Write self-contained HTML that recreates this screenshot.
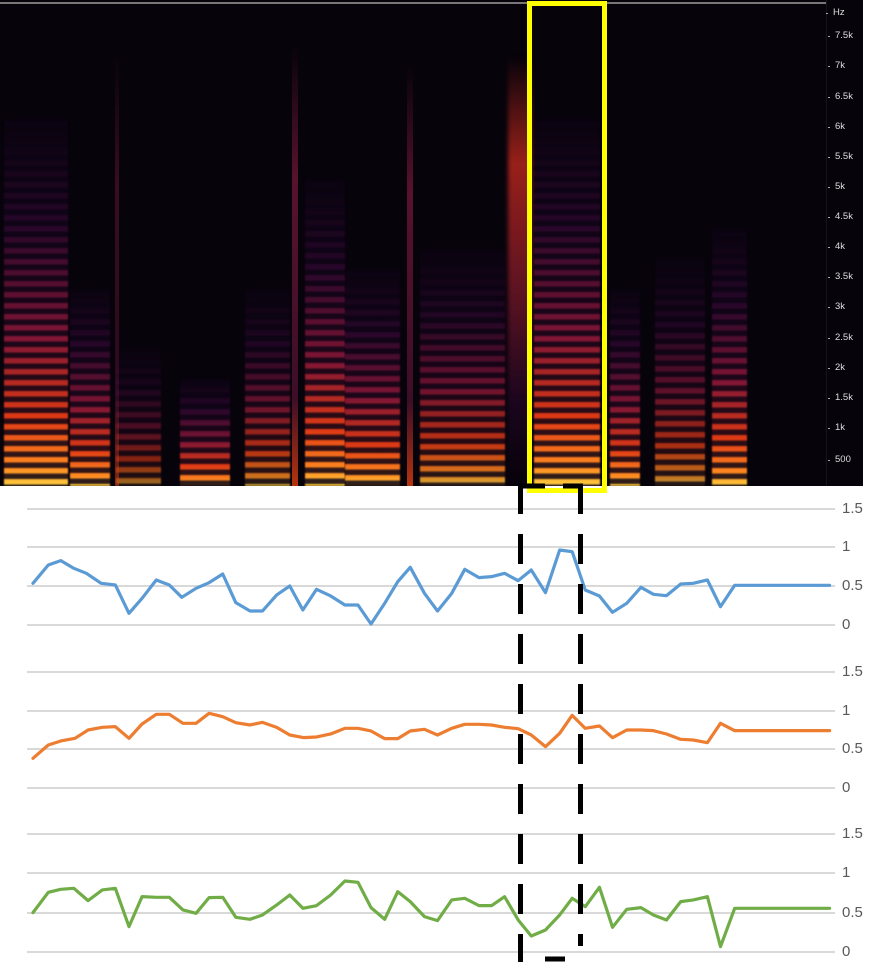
<!DOCTYPE html>
<html><head><style>
body{margin:0;width:877px;height:974px;background:#fff;position:relative;overflow:hidden;font-family:"Liberation Sans",sans-serif}
#spec{position:absolute;left:0;top:0;width:863px;height:486px;background:#07030b;overflow:hidden}
.b{position:absolute;bottom:0}
.s{background:
 repeating-linear-gradient(to bottom, rgba(7,3,11,0) 0 5px, rgba(12,3,20,.85) 6px 11px),
 linear-gradient(to bottom, rgba(60,10,80,0) 0%, rgba(80,12,80,.45) 30%, rgba(150,25,60,.85) 60%, #e03a14 82%, #ff8a20 95%, #ffd040 100%);
 filter:blur(.8px)}
.l{background:linear-gradient(to bottom,rgba(120,20,90,0),rgba(150,30,70,.7) 30%,rgba(120,25,70,.6) 80%,#e04010)}
.lab{position:absolute;left:835px;color:#ddd;font-size:9.5px;line-height:10px}
.lab:before{content:"";position:absolute;left:-7px;top:5px;width:2px;height:1px;background:#aaa}
.ax{position:absolute;left:842px;color:#595959;font-size:15px;line-height:16px}
</style></head><body>
<div id="spec">
<div style="position:absolute;left:0;top:2px;width:826px;height:2px;background:#777"></div>
<div class="b s" style="left:4px;width:64px;height:370px"></div>
<div class="b s" style="left:70px;width:40px;height:200px"></div>
<div class="b s" style="left:116px;width:45px;height:140px;opacity:.6"></div>
<div class="b l" style="left:115px;width:4px;height:430px;opacity:.5"></div>
<div class="b s" style="left:180px;width:50px;height:110px"></div>
<div class="b s" style="left:245px;width:45px;height:200px;opacity:.8"></div>
<div class="b l" style="left:292px;width:6px;height:440px;opacity:.8"></div>
<div class="b s" style="left:305px;width:40px;height:310px"></div>
<div class="b s" style="left:345px;width:55px;height:220px"></div>
<div class="b l" style="left:407px;width:6px;height:420px;opacity:.8"></div>
<div class="b s" style="left:420px;width:85px;height:240px;opacity:.85"></div>
<div class="b" style="left:508px;width:24px;height:430px;background:linear-gradient(to bottom,rgba(140,20,80,0),rgba(190,40,30,.8) 25%,rgba(150,30,50,.6) 55%,rgba(60,10,60,.4) 80%,rgba(0,0,0,0));filter:blur(2px)"></div>
<div class="b s" style="left:534px;width:66px;height:370px"></div>
<div class="b s" style="left:610px;width:30px;height:200px"></div>
<div class="b s" style="left:655px;width:50px;height:230px;opacity:.75"></div>
<div class="b s" style="left:712px;width:35px;height:260px"></div>
<div style="position:absolute;left:826px;top:0;width:1px;height:486px;background:#151515"></div>
<div class="lab" style="top:8px;left:833px">Hz</div>
<div class="lab" style="top:31px">7.5k</div><div class="lab" style="top:61px">7k</div>
<div class="lab" style="top:92px">6.5k</div><div class="lab" style="top:122px">6k</div>
<div class="lab" style="top:152px">5.5k</div><div class="lab" style="top:182px">5k</div>
<div class="lab" style="top:212px">4.5k</div><div class="lab" style="top:242px">4k</div>
<div class="lab" style="top:272px">3.5k</div><div class="lab" style="top:302px">3k</div>
<div class="lab" style="top:333px">2.5k</div><div class="lab" style="top:363px">2k</div>
<div class="lab" style="top:393px">1.5k</div><div class="lab" style="top:423px">1k</div>
<div class="lab" style="top:455px">500</div>
</div>
<div style="position:absolute;left:527px;top:1px;width:70px;height:482px;border:5px solid #ffff00"></div>

<svg width="877" height="974" style="position:absolute;left:0;top:0">
<g stroke="#d9d9d9" stroke-width="2">
<line x1="27" x2="835" y1="509" y2="509"/><line x1="27" x2="835" y1="547" y2="547"/><line x1="27" x2="835" y1="586" y2="586"/><line x1="27" x2="835" y1="625" y2="625"/>
<line x1="27" x2="835" y1="672" y2="672"/><line x1="27" x2="835" y1="711" y2="711"/><line x1="27" x2="835" y1="749" y2="749"/><line x1="27" x2="835" y1="788" y2="788"/>
<line x1="27" x2="835" y1="834" y2="834"/><line x1="27" x2="835" y1="873" y2="873"/><line x1="27" x2="835" y1="913" y2="913"/><line x1="27" x2="835" y1="952" y2="952"/>
</g>
<g fill="none" stroke-width="3.2" stroke-linejoin="round" stroke-linecap="round">
<g transform="translate(0,480) scale(0.5682,0.3333)">
<polyline vector-effect="non-scaling-stroke" stroke="#5b9bd5" points="58,310 85,255 107,242 130,265 152,280 178,310 203,315 227,400 250,355 275,300 298,315 320,352 345,325 368,308 392,282 415,368 440,393 462,393 487,345 510,318 533,390 557,328 582,348 607,375 630,375 653,432 677,370 700,305 722,262 747,340 770,393 795,340 818,268 843,293 865,290 888,280 912,302 935,270 960,338 985,210 1007,215 1030,330 1055,348 1078,397 1103,370 1128,322 1150,343 1173,347 1198,312 1220,310 1245,300 1268,380 1293,316 1460,316"/>
</g>
<g transform="translate(0,640) scale(0.5682,0.3333)">
<polyline vector-effect="non-scaling-stroke" stroke="#ed7d31" points="58,355 85,315 107,303 132,295 155,270 180,262 203,260 227,295 250,252 275,223 298,223 322,250 345,250 368,220 392,230 415,248 440,255 462,247 487,262 510,285 535,293 557,291 582,282 607,265 630,265 653,273 677,296 700,296 722,273 747,268 770,285 795,265 818,253 843,253 865,255 888,262 912,266 935,285 960,320 985,280 1007,226 1030,265 1055,258 1078,293 1103,270 1128,270 1150,272 1173,282 1198,298 1220,300 1245,308 1268,250 1293,272 1460,272"/>
<polyline vector-effect="non-scaling-stroke" stroke="#70ad47" points="58,818 85,757 107,748 130,745 155,782 180,750 203,745 227,860 250,770 275,772 298,772 322,810 345,820 368,773 392,772 415,832 440,838 462,825 487,795 510,765 533,805 557,797 582,765 607,723 630,727 653,803 677,838 700,755 722,785 747,830 770,842 795,780 818,775 843,797 865,797 888,770 912,840 935,888 960,870 985,825 1007,775 1030,800 1055,742 1078,862 1103,808 1128,803 1150,825 1173,840 1198,785 1220,780 1245,770 1268,920 1293,805 1460,805"/>
</g>
</g>
<g stroke="#000" stroke-width="5" fill="none">
<line x1="520.5" x2="520.5" y1="484" y2="962" stroke-dasharray="30 20"/>
<line x1="580.5" x2="580.5" y1="484" y2="946" stroke-dasharray="30 20"/>
<line x1="518" x2="545" y1="486" y2="486"/><line x1="563" x2="583" y1="486" y2="486"/>
<line x1="545" x2="565" y1="959" y2="959"/>
</g>
</svg>
<div class="ax" style="top:501px">1.5</div><div class="ax" style="top:539px">1</div><div class="ax" style="top:578px">0.5</div><div class="ax" style="top:617px">0</div>
<div class="ax" style="top:664px">1.5</div><div class="ax" style="top:703px">1</div><div class="ax" style="top:741px">0.5</div><div class="ax" style="top:780px">0</div>
<div class="ax" style="top:826px">1.5</div><div class="ax" style="top:865px">1</div><div class="ax" style="top:905px">0.5</div><div class="ax" style="top:944px">0</div>
</body></html>
